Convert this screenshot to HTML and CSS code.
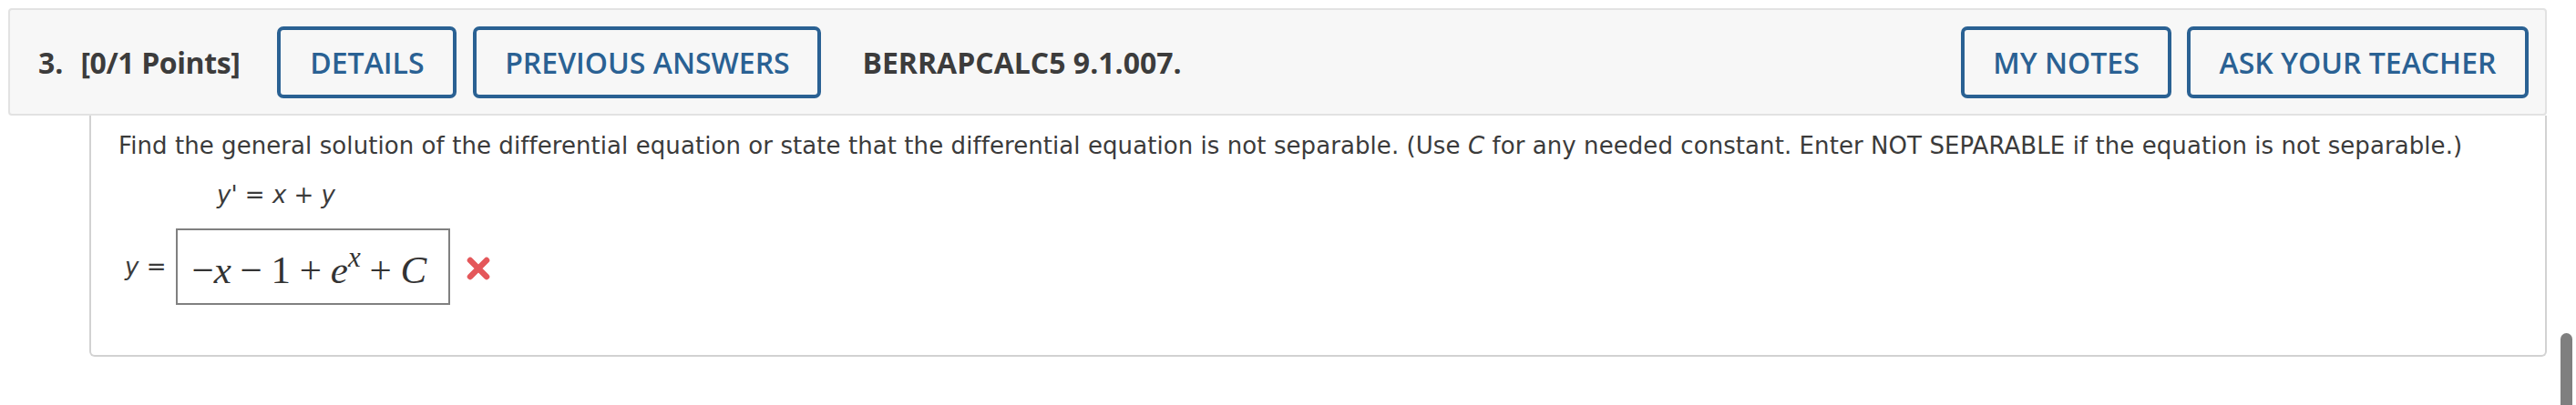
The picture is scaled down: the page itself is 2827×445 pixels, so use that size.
FILE: index.html
```html
<!DOCTYPE html>
<html>
<head>
<meta charset="utf-8">
<link rel="stylesheet" href="styles.css">
</head>
<body>
<div class="question">
  <div class="header">
    <span class="qnum">3.</span>
    <span class="points">[0/1 Points]</span>
    <button class="btn btn-details">DETAILS</button>
    <button class="btn btn-prev">PREVIOUS ANSWERS</button>
    <span class="code">BERRAPCALC5 9.1.007.</span>
    <div class="spacer"></div>
    <button class="btn btn-notes">MY NOTES</button>
    <button class="btn btn-ask">ASK YOUR TEACHER</button>
  </div>
  <div class="content">
    <p class="prompt">Find the general solution of the differential equation or state that the differential equation is not separable. (Use <i>C</i> for any needed constant. Enter NOT SEPARABLE if the equation is not separable.)</p>
    <p class="equation"><i>y'</i> = <i>x</i> + <i>y</i></p>
    <div class="answer">
      <span class="lhs"><i>y</i> =</span>
      <span class="answer-box"><span class="math">&#8722;<i>x</i> &#8722; 1 + <i>e</i><sup><i>x</i></sup> + <i>C</i></span></span>
      <svg class="wrong" width="26" height="26" viewBox="0 0 26 26" aria-label="incorrect">
        <path d="M4 4 L22 22 M22 4 L4 22" stroke="#e4575a" stroke-width="6.5" stroke-linecap="round"/>
      </svg>
    </div>
  </div>
</div>
<div class="scrollbar"></div>
</body>
</html>
```
FILE: styles.css
```css
html, body {
  margin: 0;
  padding: 0;
  background: #ffffff;
}
body {
  width: 2827px;
  height: 445px;
  overflow: hidden;
  position: relative;
  font-family: "DejaVu Sans", Verdana, sans-serif;
  color: #3b3b3b;
}
.question {
  padding: 9px 32px 0 9px;
}
.header {
  box-sizing: border-box;
  height: 118px;
  display: flex;
  align-items: center;
  background: #f7f7f7;
  border: 2px solid #e2e2e2;
  border-radius: 4px;
  padding: 0 18px 0 31px;
  font-family: "Open Sans", "Noto Sans", sans-serif;
  font-size: 32px;
  color: #3c3c3c;
}
.qnum {
  font-weight: 700;
}
.points {
  font-weight: 700;
  margin-left: 19px;
  letter-spacing: -0.4px;
}
.btn {
  box-sizing: border-box;
  height: 79px;
  margin-top: 0;
  background: transparent;
  border: 4px solid #2a6193;
  border-radius: 7px;
  color: #2a6193;
  font-family: "Open Sans", "Noto Sans", sans-serif;
  font-weight: 600;
  font-size: 32px;
  padding: 0;
  white-space: nowrap;
}
.btn-details { margin-left: 41px; width: 197px; }
.btn-prev { margin-left: 18px; width: 382px; }
.code {
  font-weight: 700;
  margin-left: 45px;
}
.spacer { flex: 1; }
.btn-notes { width: 231px; }
.btn-ask { margin-left: 17px; width: 375px; }

.content {
  box-sizing: border-box;
  margin-left: 89px;
  height: 265px;
  border: 2px solid #d2d2d2;
  border-top: none;
  border-radius: 0 0 6px 6px;
  padding: 15px 0 0 30px;
  font-size: 26px;
}
.prompt {
  margin: 0;
  line-height: 36px;
  letter-spacing: 0.07px;
}
.equation {
  margin: 18px 0 0 108px;
  line-height: 36px;
}
.answer {
  display: flex;
  align-items: center;
  margin-top: 19px;
  margin-left: 7px;
}
.lhs {
  margin-right: 11px;
}
.answer-box {
  box-sizing: border-box;
  width: 301px;
  height: 84px;
  border: 2px solid #808080;
  display: flex;
  align-items: center;
  padding: 6px 0 0 15px;
}
.math {
  font-family: "Liberation Serif", "Times New Roman", serif;
  font-size: 43px;
  color: #333;
  white-space: nowrap;
  word-spacing: -1px;
}
.math sup {
  font-size: 31px;
  vertical-align: 0;
  position: relative;
  top: -18px;
}
.wrong {
  margin-left: 18px;
  margin-top: 4px;
}
.scrollbar {
  position: absolute;
  left: 2810px;
  top: 366px;
  width: 13px;
  height: 100px;
  background: #7f7f7f;
  border-radius: 7px 7px 0 0;
}
```
